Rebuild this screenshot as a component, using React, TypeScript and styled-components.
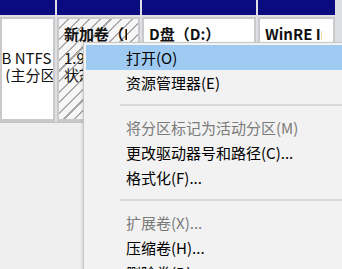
import React from "react";
import styled, { createGlobalStyle } from "styled-components";

const GlobalStyle = createGlobalStyle`
  html, body {
    margin: 0;
    padding: 0;
    background: #f0f0f0;
  }
  body {
    font-family: "Noto Sans CJK SC", "Noto Sans", sans-serif;
  }
`;

const Page = styled.div`
  position: relative;
  width: 342px;
  height: 269px;
  overflow: hidden;
  background: #efefef;
`;

const DiskRow = styled.div`
  display: flex;
  gap: 2px;
  height: 122px;
  padding-right: 6px;
  background: #dedee6;
  border-bottom: 1px solid #c4c4c4;
`;

const PartCol = styled.div<{ $w: number }>`
  display: flex;
  flex-direction: column;
  width: ${(p) => p.$w}px;
  flex-shrink: 0;
  overflow: hidden;
`;

const PartHeader = styled.div`
  height: 15px;
  background: #0b0b80;
`;

const PartBody = styled.div<{ $hatched?: boolean }>`
  flex: 1;
  margin-top: 2px;
  border: 2px solid #c9c9c9;
  border-bottom-width: 3px;
  background: ${(p) =>
    p.$hatched
      ? "repeating-linear-gradient(135deg, #f6f6f6 0px, #f6f6f6 6px, #a9a9a9 6px, #a9a9a9 7.5px)"
      : "#ffffff"};
  padding: 6px 0 0 5px;
  overflow: hidden;
`;

const TextBlock = styled.div<{ $shift?: number; $clip?: number }>`
  margin-left: ${(p) => p.$shift ?? 0}px;
  width: ${(p) => (p.$clip ? `${p.$clip}px` : "auto")};
  overflow: hidden;
  white-space: nowrap;
  color: #111;
`;

const Title = styled.div`
  font-size: 15px;
  font-weight: 700;
  line-height: 18px;
  margin-bottom: 6px;
`;

const Line = styled.div`
  font-size: 15px;
  line-height: 17px;
`;

const Menu = styled.div`
  position: absolute;
  left: 83px;
  top: 42px;
  right: -20px;
  bottom: -40px;
  background: #f2f2f2;
  border: 1px solid #c6c6c6;
  box-shadow: -1px 1px 3px rgba(0, 0, 0, 0.12);
  padding: 2px 2px;
  font-size: 15px;
`;

const Item = styled.div<{ $active?: boolean; $disabled?: boolean }>`
  height: 25px;
  line-height: 25px;
  padding-left: 40px;
  white-space: nowrap;
  color: ${(p) => (p.$disabled ? "#7a7a7a" : "#000")};
  background: ${(p) => (p.$active ? "#9fcbf2" : "transparent")};
`;

const Separator = styled.div`
  height: 20px;
  display: flex;
  align-items: center;
  padding-left: 34px;

  &::after {
    content: "";
    flex: 1;
    height: 2px;
    background: #d9d9d9;
  }
`;

const menu: Array<{ label?: string; active?: boolean; disabled?: boolean; sep?: boolean }> = [
  { label: "打开(O)", active: true },
  { label: "资源管理器(E)" },
  { sep: true },
  { label: "将分区标记为活动分区(M)", disabled: true },
  { label: "更改驱动器号和路径(C)..." },
  { label: "格式化(F)..." },
  { sep: true },
  { label: "扩展卷(X)...", disabled: true },
  { label: "压缩卷(H)..." },
  { label: "删除卷(D)..." },
];

const App: React.FC = () => {
  return (
    <>
      <GlobalStyle />
      <Page>
        <DiskRow>
          <PartCol $w={55}>
            <PartHeader />
            <PartBody>
              <TextBlock $shift={-65}>
                <Title>(C:)</Title>
                <Line>100.00 GB NTFS</Line>
                <Line>状态良好 (主分区)</Line>
              </TextBlock>
            </PartBody>
          </PartCol>
          <PartCol $w={83}>
            <PartHeader />
            <PartBody $hatched>
              <TextBlock $clip={63}>
                <Title>新加卷（I:）</Title>
                <Line>1.95 GB NTFS</Line>
                <Line>状态良好 (主分区)</Line>
              </TextBlock>
            </PartBody>
          </PartCol>
          <PartCol $w={114}>
            <PartHeader />
            <PartBody>
              <TextBlock>
                <Title>D盘（D:）</Title>
                <Line>120.00 GB NTFS</Line>
                <Line>状态良好 (主分区)</Line>
              </TextBlock>
            </PartBody>
          </PartCol>
          <PartCol $w={77}>
            <PartHeader />
            <PartBody>
              <TextBlock $clip={57}>
                <Title>WinRE Image</Title>
                <Line>500 MB NTFS</Line>
                <Line>状态良好 (OEM 分区)</Line>
              </TextBlock>
            </PartBody>
          </PartCol>
        </DiskRow>
        <Menu>
          {menu.map((m, i) =>
            m.sep ? (
              <Separator key={i} />
            ) : (
              <Item key={i} $active={m.active} $disabled={m.disabled}>
                {m.label}
              </Item>
            )
          )}
        </Menu>
      </Page>
    </>
  );
};

export default App;
